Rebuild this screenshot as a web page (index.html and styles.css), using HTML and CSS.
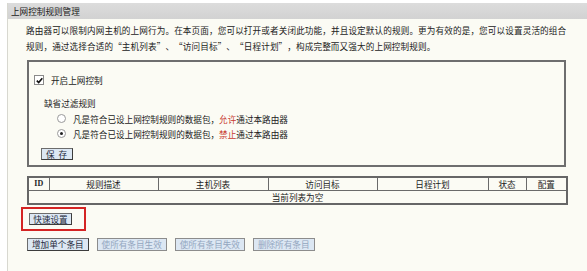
FILE: index.html
```html
<!DOCTYPE html>
<html lang="zh-CN">
<head>
<meta charset="utf-8">
<title>上网控制规则管理</title>
<link rel="stylesheet" href="styles.css">
</head>
<body>
<div class="page">
  <div class="titlebar">上网控制规则管理</div>
  <div class="content">
    <p class="intro">路由器可以限制内网主机的上网行为。在本页面，您可以打开或者关闭此功能，并且设定默认的规则。更为有效的是，您可以设置灵活的组合<br>规则，通过选择合适的<span class="qo">“</span>主机列表<span class="qc">”</span>、<span class="qo">“</span>访问目标<span class="qc">”</span>、<span class="qo">“</span>日程计划<span class="qc">”</span>，构成完整而又强大的上网控制规则。</p>
    <div class="frame">
      <div class="check-row">
        <span class="checkbox"><svg width="7" height="7" viewBox="0 0 7 7"><path d="M0.8 3.6 L2.7 5.6 L6.3 1.2" fill="none" stroke="#111" stroke-width="1.6"/></svg></span>
        <span>开启上网控制</span>
      </div>
      <div class="subhead">缺省过滤规则</div>
      <div class="radio-row"><span class="radio"></span><span>凡是符合已设上网控制规则的数据包，<span class="red">允许</span>通过本路由器</span></div>
      <div class="radio-row"><span class="radio checked"></span><span>凡是符合已设上网控制规则的数据包，<span class="red">禁止</span>通过本路由器</span></div>
      <div class="save-row"><button class="btn save">保 存</button></div>
    </div>
    <table class="rules">
      <colgroup>
        <col class="c-id"><col class="c-desc"><col class="c-host"><col class="c-target"><col class="c-sched"><col class="c-state"><col class="c-conf">
      </colgroup>
      <tr class="head">
        <th class="id">ID</th><th>规则描述</th><th>主机列表</th><th>访问目标</th><th>日程计划</th><th>状态</th><th>配置</th>
      </tr>
      <tr class="empty"><td colspan="7">当前列表为空</td></tr>
    </table>
    <div class="quick"><button class="btn">快速设置</button></div>
    <div class="actions">
      <button class="btn">增加单个条目</button>
      <button class="btn disabled">使所有条目生效</button>
      <button class="btn disabled">使所有条目失效</button>
      <button class="btn disabled">删除所有条目</button>
    </div>
  </div>
</div>
</body>
</html>
```
FILE: styles.css
```css
html, body {
  margin: 0;
  padding: 0;
  background: #ffffff;
}
body {
  font-family: "Noto Sans CJK SC", "Noto Sans", sans-serif;
  font-size: 8.6px;
  color: #222;
}
.page {
  margin: 3px 0 0 7px;
  border-left: 1px solid #d8d8d0;
  height: 268px;
  background: #fbfbf4;
}
.titlebar {
  height: 16px;
  line-height: 16px;
  padding-left: 3px;
  background: linear-gradient(#dcdcdc, #d2d2d2);
  color: #1a1a1a;
}
.content {
  padding: 3px 21px 0 19px;
}
.intro {
  margin: 0 0 6px -1px;
  line-height: 16px;
  white-space: nowrap;
  letter-spacing: 0.12px;
}
.qo, .qc {
  display: inline-block;
  width: 8.7px;
}
.qo { text-align: right; }
.qc { text-align: left; }
.frame {
  border: 2px solid #6e6e6e;
  height: 93px;
  box-sizing: content-box;
  padding: 10px 0 0 5px;
}
.check-row {
  height: 16px;
  display: flex;
  align-items: center;
  gap: 7px;
}
.checkbox {
  width: 8px;
  height: 8px;
  border: 1px solid #8a8a8a;
  background: #fff;
  display: flex;
  align-items: center;
  justify-content: center;
}
.subhead {
  margin-top: 7px;
  height: 16px;
  line-height: 16px;
  padding-left: 10px;
}
.radio-row {
  height: 15px;
  display: flex;
  align-items: center;
  gap: 7px;
  padding-left: 23px;
}
.radio {
  width: 7px;
  height: 7px;
  border: 1px solid #9a9a9a;
  border-radius: 50%;
  background: #fff;
  position: relative;
}
.radio.checked::after {
  content: "";
  position: absolute;
  left: 2px;
  top: 2px;
  width: 3px;
  height: 3px;
  border-radius: 50%;
  background: #222;
}
.red {
  color: #c83a2e;
}
.save-row {
  margin-top: 7px;
  padding-left: 7px;
}
.btn {
  font-family: inherit;
  font-size: 8.6px;
  color: #1e2a3a;
  background: #dce7f3;
  border: 1px solid #6c6c6c;
  border-right-color: #3c3c3c;
  border-bottom-color: #3c3c3c;
  height: 13px;
  line-height: 11px;
  padding: 0 4px;
  margin: 0;
  cursor: pointer;
}
.btn.save {
  width: 32px;
  height: 12px;
  padding: 0;
  letter-spacing: 1px;
}
.btn.disabled {
  color: #93a6c0;
  border-color: #8c8c8c;
}
.rules {
  margin-top: 9px;
  width: 539px;
  border-collapse: collapse;
  border: 2px solid #666;
  table-layout: fixed;
}
.c-id { width: 21px; }
.c-desc { width: 109px; }
.c-host { width: 110px; }
.c-target { width: 109px; }
.c-sched { width: 111px; }
.c-state { width: 38px; }
.c-conf { width: 41px; }
.rules th, .rules td {
  border: 1px solid #6a6a6a;
  font-weight: normal;
  padding: 0;
  text-align: center;
}
.rules .head th {
  height: 12px;
  line-height: 12px;
}
.rules th.id {
  font-family: "Liberation Serif", serif;
  font-weight: bold;
  font-size: 8px;
}
.rules .empty td {
  height: 12px;
  line-height: 12px;
}
.quick {
  margin: 2px 0 0 -6px;
  width: 55px;
  height: 16px;
  border: 2px solid #d42424;
  padding: 4px 0 0 6px;
  box-sizing: content-box;
  display: flex;
  align-items: flex-start;
}
.quick .btn {
  width: 43px;
  height: 12px;
  padding: 0;
}
.actions {
  margin-top: 7px;
  display: flex;
  gap: 8px;
}
```
